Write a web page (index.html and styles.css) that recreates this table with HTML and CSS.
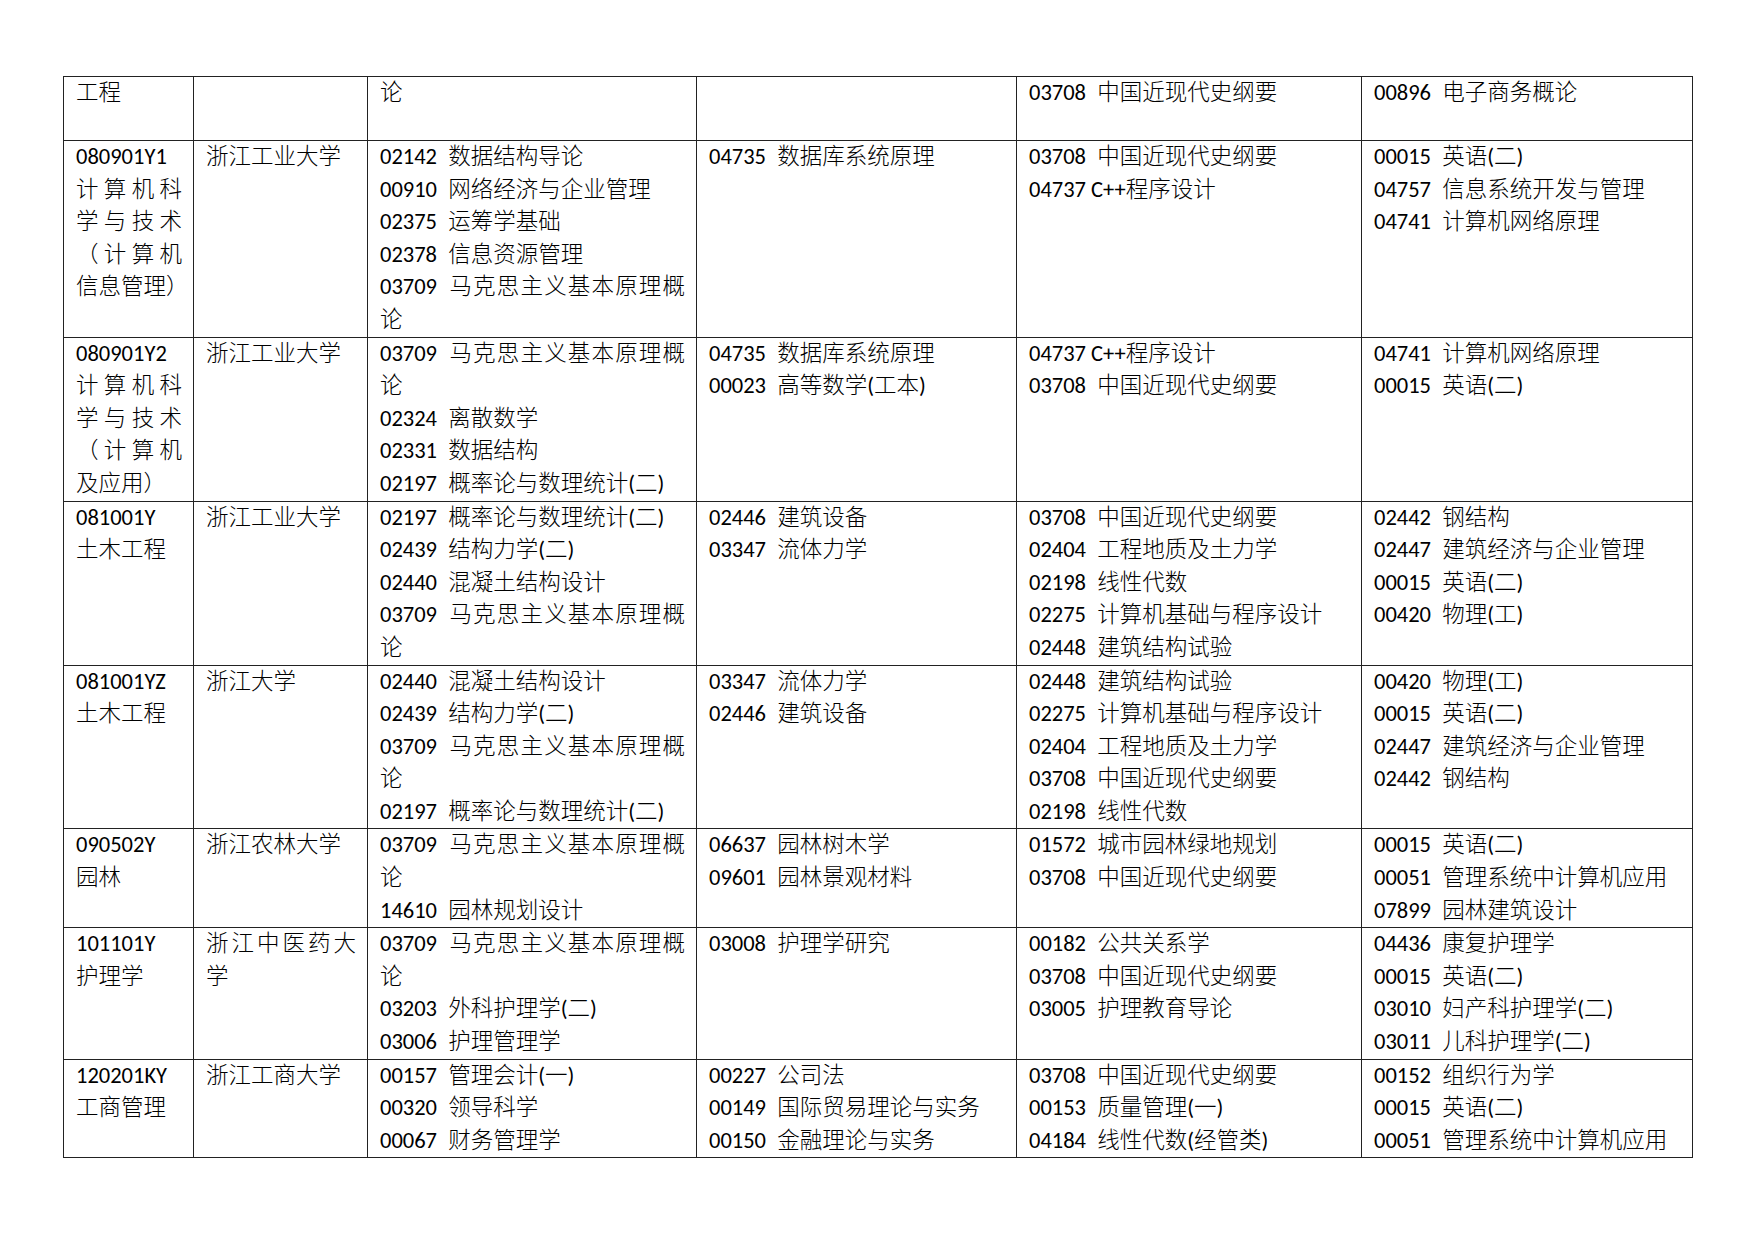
FILE: index.html
```html
<!DOCTYPE html>
<html lang="zh-CN">
<head>
<meta charset="utf-8">
<title>课程表</title>
<link rel="stylesheet" href="styles.css">
</head>
<body>
<table class="plan">
<colgroup>
<col class="c1"><col class="c2"><col class="c3"><col class="c4"><col class="c5"><col class="c6">
</colgroup>
<tbody>
<tr class="first">
<td>工程</td>
<td></td>
<td>论</td>
<td></td>
<td><div>03708&ensp;中国近现代史纲要</div></td>
<td><div>00896&ensp;电子商务概论</div></td>
</tr>
<tr>
<td><div>080901Y1</div><div>计算机科学与技术（计算机信息管理<span class="hw">）</span></div></td>
<td>浙江工业大学</td>
<td><div>02142&ensp;数据结构导论</div><div>00910&ensp;网络经济与企业管理</div><div>02375&ensp;运筹学基础</div><div>02378&ensp;信息资源管理</div><div>03709&ensp;马克思主义基本原理概论</div></td>
<td><div>04735&ensp;数据库系统原理</div></td>
<td><div>03708&ensp;中国近现代史纲要</div><div>04737 C++程序设计</div></td>
<td><div>00015&ensp;英语(二)</div><div>04757&ensp;信息系统开发与管理</div><div>04741&ensp;计算机网络原理</div></td>
</tr>
<tr>
<td><div>080901Y2</div><div>计算机科学与技术（计算机及应用<span class="hw">）</span></div></td>
<td>浙江工业大学</td>
<td><div>03709&ensp;马克思主义基本原理概论</div><div>02324&ensp;离散数学</div><div>02331&ensp;数据结构</div><div>02197&ensp;概率论与数理统计(二)</div></td>
<td><div>04735&ensp;数据库系统原理</div><div>00023&ensp;高等数学(工本)</div></td>
<td><div>04737 C++程序设计</div><div>03708&ensp;中国近现代史纲要</div></td>
<td><div>04741&ensp;计算机网络原理</div><div>00015&ensp;英语(二)</div></td>
</tr>
<tr>
<td><div>081001Y</div><div>土木工程</div></td>
<td>浙江工业大学</td>
<td><div>02197&ensp;概率论与数理统计(二)</div><div>02439&ensp;结构力学(二)</div><div>02440&ensp;混凝土结构设计</div><div>03709&ensp;马克思主义基本原理概论</div></td>
<td><div>02446&ensp;建筑设备</div><div>03347&ensp;流体力学</div></td>
<td><div>03708&ensp;中国近现代史纲要</div><div>02404&ensp;工程地质及土力学</div><div>02198&ensp;线性代数</div><div>02275&ensp;计算机基础与程序设计</div><div>02448&ensp;建筑结构试验</div></td>
<td><div>02442&ensp;钢结构</div><div>02447&ensp;建筑经济与企业管理</div><div>00015&ensp;英语(二)</div><div>00420&ensp;物理(工)</div></td>
</tr>
<tr>
<td><div>081001YZ</div><div>土木工程</div></td>
<td>浙江大学</td>
<td><div>02440&ensp;混凝土结构设计</div><div>02439&ensp;结构力学(二)</div><div>03709&ensp;马克思主义基本原理概论</div><div>02197&ensp;概率论与数理统计(二)</div></td>
<td><div>03347&ensp;流体力学</div><div>02446&ensp;建筑设备</div></td>
<td><div>02448&ensp;建筑结构试验</div><div>02275&ensp;计算机基础与程序设计</div><div>02404&ensp;工程地质及土力学</div><div>03708&ensp;中国近现代史纲要</div><div>02198&ensp;线性代数</div></td>
<td><div>00420&ensp;物理(工)</div><div>00015&ensp;英语(二)</div><div>02447&ensp;建筑经济与企业管理</div><div>02442&ensp;钢结构</div></td>
</tr>
<tr>
<td><div>090502Y</div><div>园林</div></td>
<td>浙江农林大学</td>
<td><div>03709&ensp;马克思主义基本原理概论</div><div>14610&ensp;园林规划设计</div></td>
<td><div>06637&ensp;园林树木学</div><div>09601&ensp;园林景观材料</div></td>
<td><div>01572&ensp;城市园林绿地规划</div><div>03708&ensp;中国近现代史纲要</div></td>
<td><div>00015&ensp;英语(二)</div><div>00051&ensp;管理系统中计算机应用</div><div>07899&ensp;园林建筑设计</div></td>
</tr>
<tr>
<td><div>101101Y</div><div>护理学</div></td>
<td>浙江中医药大学</td>
<td><div>03709&ensp;马克思主义基本原理概论</div><div>03203&ensp;外科护理学(二)</div><div>03006&ensp;护理管理学</div></td>
<td><div>03008&ensp;护理学研究</div></td>
<td><div>00182&ensp;公共关系学</div><div>03708&ensp;中国近现代史纲要</div><div>03005&ensp;护理教育导论</div></td>
<td><div>04436&ensp;康复护理学</div><div>00015&ensp;英语(二)</div><div>03010&ensp;妇产科护理学(二)</div><div>03011&ensp;儿科护理学(二)</div></td>
</tr>
<tr>
<td><div>120201KY</div><div>工商管理</div></td>
<td>浙江工商大学</td>
<td><div>00157&ensp;管理会计(一)</div><div>00320&ensp;领导科学</div><div>00067&ensp;财务管理学</div></td>
<td><div>00227&ensp;公司法</div><div>00149&ensp;国际贸易理论与实务</div><div>00150&ensp;金融理论与实务</div></td>
<td><div>03708&ensp;中国近现代史纲要</div><div>00153&ensp;质量管理(一)</div><div>04184&ensp;线性代数(经管类)</div></td>
<td><div>00152&ensp;组织行为学</div><div>00015&ensp;英语(二)</div><div>00051&ensp;管理系统中计算机应用</div></td>
</tr>
</tbody>
</table>
</body>
</html>
```

FILE: styles.css
```css
html, body {
  margin: 0;
  padding: 0;
  background: #fff;
}

body {
  padding: 76px 0 0 63px;
  font-family: Carlito, "Noto Sans CJK SC", "Liberation Sans", sans-serif;
  font-size: 22.5px;
  font-weight: 300;
  color: #000;
}

.plan {
  border-collapse: collapse;
  table-layout: fixed;
  width: 1629px;
  border: 1px solid #000;
}

.c1 { width: 130px; }
.c2 { width: 174px; }
.c3 { width: 329px; }
.c4 { width: 320px; }
.c5 { width: 345px; }
.c6 { width: 331px; }

.plan td {
  border: 1px solid #222;
  padding: 0 11px 0 12px;
  vertical-align: top;
  line-height: 32.6px;
  text-align: justify;
  word-break: normal;
}

.plan tr.first {
  height: 64px;
}

.hw {
  font-feature-settings: "halt";
}
```
